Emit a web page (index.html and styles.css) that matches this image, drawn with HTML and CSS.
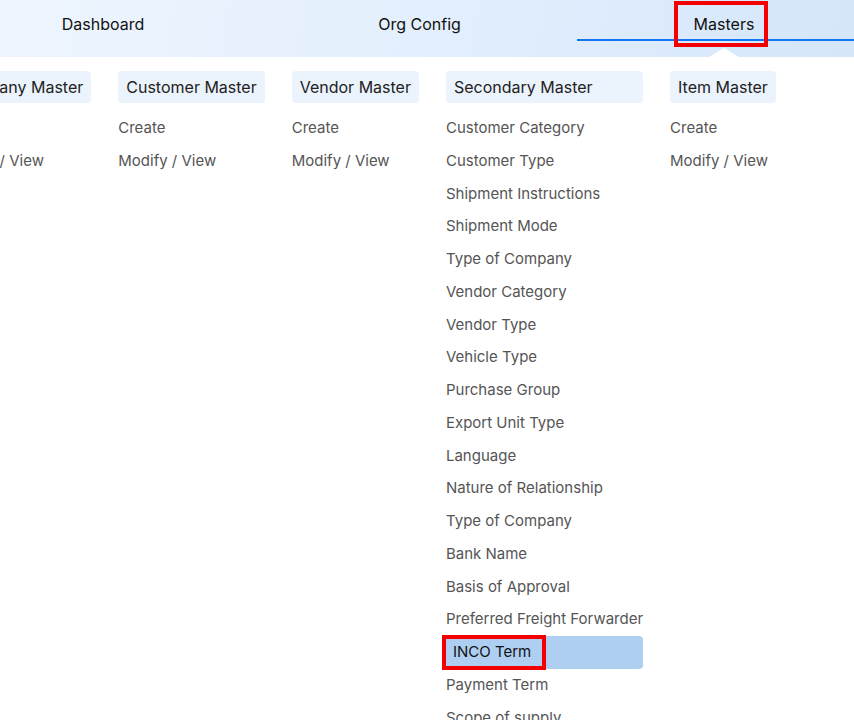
FILE: index.html
```html
<!DOCTYPE html>
<html lang="en">

<head>
    <meta charset="UTF-8">
    <meta name="viewport" content="width=device-width, initial-scale=1.0">
    <title>Masters</title>
    <link rel="stylesheet" href="styles.css">
</head>

<body>
    <div class="topnav">
        <a href="#" class="tab tab-dash">Dashboard</a>
        <a href="#" class="tab tab-org">Org Config</a>
        <a href="#" class="tab tab-masters on">
            <span>Masters</span>
            <i class="annot annot-tab"></i>
            <i class="caret"></i>
        </a>
    </div>

    <div class="menu">
        <ul class="col">
            <li class="head">Company Master</li>
            <li><a href="#">Create</a></li>
            <li><a href="#">Modify / View</a></li>
        </ul>
        <ul class="col">
            <li class="head">Customer Master</li>
            <li><a href="#">Create</a></li>
            <li><a href="#">Modify / View</a></li>
        </ul>
        <ul class="col">
            <li class="head">Vendor Master</li>
            <li><a href="#">Create</a></li>
            <li><a href="#">Modify / View</a></li>
        </ul>
        <ul class="col">
            <li class="head">Secondary Master</li>
            <li><a href="#">Customer Category</a></li>
            <li><a href="#">Customer Type</a></li>
            <li><a href="#">Shipment Instructions</a></li>
            <li><a href="#">Shipment Mode</a></li>
            <li><a href="#">Type of Company</a></li>
            <li><a href="#">Vendor Category</a></li>
            <li><a href="#">Vendor Type</a></li>
            <li><a href="#">Vehicle Type</a></li>
            <li><a href="#">Purchase Group</a></li>
            <li><a href="#">Export Unit Type</a></li>
            <li><a href="#">Language</a></li>
            <li><a href="#">Nature of Relationship</a></li>
            <li><a href="#">Type of Company</a></li>
            <li><a href="#">Bank Name</a></li>
            <li><a href="#">Basis of Approval</a></li>
            <li><a href="#">Preferred Freight Forwarder</a></li>
            <li class="sel"><a href="#">INCO Term</a><i class="annot annot-item"></i></li>
            <li><a href="#">Payment Term</a></li>
            <li><a href="#">Scope of supply</a></li>
        </ul>
        <ul class="col">
            <li class="head">Item Master</li>
            <li><a href="#">Create</a></li>
            <li><a href="#">Modify / View</a></li>
        </ul>
    </div>
</body>

</html>
```

FILE: styles.css
```css
* {
    margin: 0;
    padding: 0;
    box-sizing: border-box;
}

ul {
    list-style: none;
}

a {
    text-decoration: none;
    color: inherit;
}

body {
    font-family: Inter, "Noto Sans", sans-serif;
    background: #fff;
    overflow: hidden;
}

.topnav {
    display: flex;
    height: 57px;
    background: linear-gradient(100deg, #eef5fe 0%, #e3effd 50%, #d5e6fb 100%);
}

.topnav .tab {
    position: relative;
    display: block;
    flex-shrink: 0;
    height: 57px;
    padding-top: 14px;
    text-align: center;
    font-size: 16px;
    color: #111;
}

.tab-dash {
    width: 206px;
}

.tab-org {
    width: 315px;
    margin-left: 56px;
}

.tab-masters {
    width: 294px;
}

.tab-masters.on::before {
    content: "";
    position: absolute;
    left: 0;
    right: 0;
    top: 39px;
    height: 2px;
    background: #1277f0;
}

.caret {
    position: absolute;
    left: 132px;
    bottom: 0;
    width: 0;
    height: 0;
    border-left: 15px solid transparent;
    border-right: 15px solid transparent;
    border-bottom: 9px solid #fff;
}

.annot {
    position: absolute;
    border: 4px solid #f40000;
    pointer-events: none;
}

.annot-tab {
    left: 97px;
    top: 1px;
    width: 94px;
    height: 46px;
}

.menu {
    display: flex;
    gap: 27px;
    margin-left: -54px;
    padding-top: 14px;
}

.col {
    display: flex;
    flex-direction: column;
}

.col .head {
    height: 32px;
    line-height: 32px;
    padding: 0 8px;
    margin-bottom: 9px;
    font-size: 16px;
    color: #222;
    background: #ebf3fd;
    border-radius: 4px;
    white-space: nowrap;
}

.col li a {
    display: block;
    height: 32.75px;
    line-height: 32.75px;
    font-size: 15px;
    color: #555;
    white-space: nowrap;
}

.col .sel {
    position: relative;
    margin-left: -4px;
    background: #aecff1;
    border-radius: 4px;
}

.col .sel a {
    padding-left: 11px;
    color: #111;
}

.annot-item {
    left: 0;
    top: -1px;
    width: 104px;
    height: 35px;
}
```
